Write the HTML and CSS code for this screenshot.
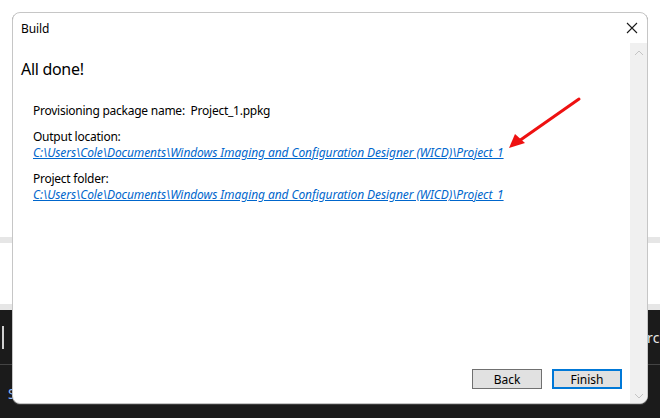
FILE: index.html
```html
<!DOCTYPE html>
<html>
<head>
<meta charset="utf-8">
<link rel="stylesheet" href="styles.css">
</head>
<body>
<div class="backdrop">
  <div class="bg-white bg-top"></div>
  <div class="bg-gray"></div>
  <div class="bg-white bg-mid"></div>
  <div class="bg-gray"></div>
  <div class="bg-dark">
    <div class="dark-row">
      <span class="caret"></span>
      <span class="search-text">Search</span>
    </div>
    <div class="dark-line"></div>
    <div class="dark-row2"><span class="s-text">S</span></div>
  </div>
</div>

<div class="dialog">
  <div class="titlebar">
    <span class="title">Build</span>
    <svg class="close" width="12" height="12" viewBox="0 0 12 12"><path d="M1 1 L11 11 M11 1 L1 11" stroke="#1a1a1a" stroke-width="1.1" fill="none"/></svg>
  </div>
  <div class="body">
    <div class="content">
      <h1 class="heading">All done!</h1>
      <div class="info">
        <div class="row">Provisioning package name:&nbsp; Project_1.ppkg</div>
        <div class="group">
          <div class="label">Output location:</div>
          <a class="link">C:\Users\Cole\Documents\Windows Imaging and Configuration Designer (WICD)\Project_1</a>
        </div>
        <div class="group">
          <div class="label">Project folder:</div>
          <a class="link">C:\Users\Cole\Documents\Windows Imaging and Configuration Designer (WICD)\Project_1</a>
        </div>
      </div>
      <div class="buttons">
        <button class="btn">Back</button>
        <button class="btn btn-primary">Finish</button>
      </div>
    </div>
    <div class="scrollbar">
      <svg width="10" height="6" viewBox="0 0 10 6"><path d="M1 5 L5 1 L9 5" stroke="#c4c4c4" stroke-width="1" fill="none"/></svg>
      <svg width="10" height="6" viewBox="0 0 10 6"><path d="M1 1 L5 5 L9 1" stroke="#c4c4c4" stroke-width="1" fill="none"/></svg>
    </div>
  </div>
  <svg class="arrow" width="90" height="60" viewBox="0 0 90 60">
    <path d="M78 3 L18 45" stroke="#ee1111" stroke-width="3" stroke-linecap="round" fill="none"/>
    <path d="M8 52 L14 38 L24 47 Z" fill="#ee1111"/>
  </svg>
</div>
</body>
</html>
```

FILE: styles.css
```css
* { box-sizing: border-box; }
html, body { margin: 0; padding: 0; }
body {
  width: 660px;
  height: 418px;
  overflow: hidden;
  position: relative;
  font-family: "Noto Sans", "Open Sans", sans-serif;
  background: #1b1b1b;
}
.backdrop {
  display: flex;
  flex-direction: column;
  height: 418px;
}
.bg-white { background: #ffffff; }
.bg-top { height: 237px; }
.bg-mid { height: 61px; }
.bg-gray { height: 6px; background: #e6e6e6; }
.bg-dark {
  flex: 1;
  background: #1b1b1b;
  display: flex;
  flex-direction: column;
}
.dark-row {
  height: 54px;
  display: flex;
  align-items: center;
  justify-content: space-between;
  padding-left: 2px;
}
.caret {
  width: 2px;
  height: 23px;
  background: #d0d0d0;
}
.search-text {
  color: #e8e8e8;
  font-size: 14px;
  margin-right: -8px;
}
.dark-line { height: 1px; background: #444444; }
.dark-row2 {
  padding: 17px 0 0 8px;
}
.s-text { color: #8ab8ff; font-size: 14px; }

.dialog {
  position: absolute;
  left: 12px;
  top: 12px;
  width: 636px;
  height: 392px;
  background: #ffffff;
  border: 1px solid #c6c6c6;
  border-radius: 8px;
  box-shadow: 0 1px 0 #3c3c3c;
  display: flex;
  flex-direction: column;
}
.titlebar {
  height: 30px;
  display: flex;
  align-items: center;
  justify-content: space-between;
  padding: 0 9px 0 8px;
}
.title {
  font-size: 12px;
  color: #000;
  letter-spacing: -0.1px;
}
.close { display: block; }
.body {
  flex: 1;
  display: flex;
  min-height: 0;
}
.content {
  flex: 1;
  display: flex;
  flex-direction: column;
  padding: 14px 8px 14px 8px;
}
.heading {
  margin: 0;
  font-weight: normal;
  font-size: 16px;
  line-height: 24px;
  letter-spacing: -0.3px;
  color: #000;
}
.info {
  padding: 22px 0 0 12px;
  font-size: 12px;
  line-height: 16px;
  letter-spacing: -0.25px;
  color: #000;
  display: flex;
  flex-direction: column;
  gap: 10px;
}
.group { display: flex; flex-direction: column; }
.link {
  color: #0066cc;
  font-style: italic;
  text-decoration: underline;
  letter-spacing: -0.08px;
}
.buttons {
  margin-top: auto;
  display: flex;
  justify-content: flex-end;
  gap: 10px;
}
.btn {
  width: 70px;
  height: 20px;
  background: #e1e1e1;
  border: 1px solid #adadad;
  outline: 1px solid #707070;
  outline-offset: -1px;
  font-family: inherit;
  font-size: 12px;
  color: #000;
  padding: 0;
}
.btn-primary {
  border: 2px solid #0078d7;
  outline: none;
}
.scrollbar {
  width: 17px;
  background: #f0f0f0;
  display: flex;
  flex-direction: column;
  justify-content: space-between;
  align-items: center;
  padding: 7px 0 4px;
  border-bottom-right-radius: 7px;
}
.arrow {
  position: absolute;
  left: 488px;
  top: 83px;
}
```
